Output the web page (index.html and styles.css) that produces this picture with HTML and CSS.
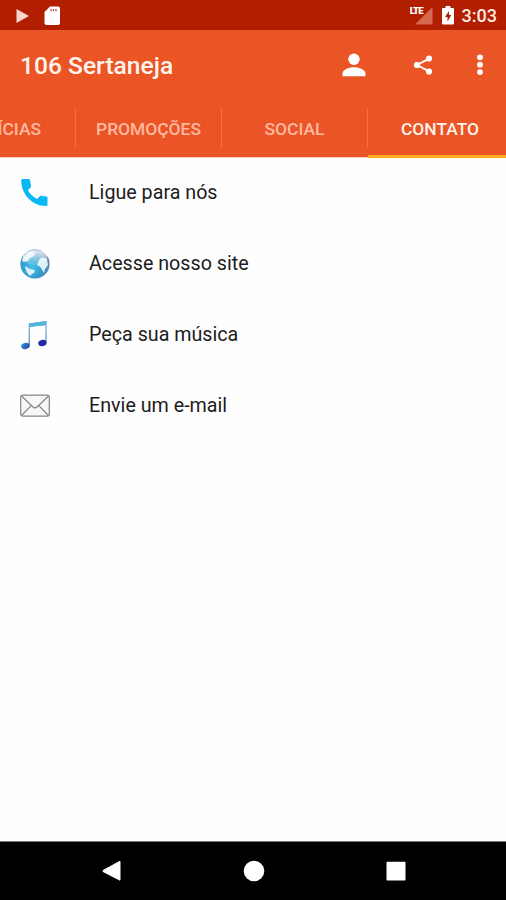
FILE: index.html
```html
<!DOCTYPE html>
<html lang="pt-BR">
<head>
<meta charset="utf-8">
<title>106 Sertaneja</title>
<link rel="stylesheet" href="styles.css">
</head>
<body>
<header class="status">
  <svg class="status-play" width="14" height="16" viewBox="0 0 14 16"><path d="M.5 1 13 8 .5 15z" fill="#f8d5ca"/></svg>
  <svg class="status-card" width="16" height="20" viewBox="0 0 16 20"><path d="M6 .5h8a2 2 0 0 1 2 2V17a2 2 0 0 1-2 2H2.500a2 2 0 0 1-2-2V6z" fill="#fff"/><path d="M7 3v2.200M9.500 3v2.200M12 3v2.200" stroke="#b9503c" stroke-width="1.300"/></svg>
  <span class="lte">LTE</span>
  <svg class="status-signal" width="18" height="18" viewBox="0 0 18 18"><path d="M17.500 0v17.500H0z" fill="#d46b50"/></svg>
  <svg class="status-battery" width="12" height="19" viewBox="0 0 12 19"><path d="M3.500 0h5v2H11a1 1 0 0 1 1 1v14.500a1 1 0 0 1-1 1H1a1 1 0 0 1-1-1V3a1 1 0 0 1 1-1h2.500z" fill="#fff"/><path d="M7 5 3 11h2.500v4.500L9.300 9H7z" fill="#a91f08"/></svg>
  <time class="clock">3:03</time>
</header>
<div class="appbar">
  <h1>106 Sertaneja</h1>
  <svg class="person" width="24" height="24" viewBox="0 0 24 24" fill="#fff"><circle cx="12" cy="6.300" r="5.700"/><path d="M.5 23.300v-2.500c0-4 6-6.500 11.500-6.500s11.500 2.500 11.500 6.500v2.500z"/></svg>
  <svg class="share" width="20" height="20" viewBox="0 0 20 20" fill="#fff"><path d="M16 3.600 4 10l12 6.400" fill="none" stroke="#fff" stroke-width="1.800"/><circle cx="16" cy="3.500" r="3.100"/><circle cx="4" cy="10" r="3.100"/><circle cx="16" cy="16.500" r="3.100"/></svg>
  <svg class="more" width="6" height="22" viewBox="0 0 6 22" fill="#fff"><circle cx="3" cy="3.300" r="2.900"/><circle cx="3" cy="10.700" r="2.900"/><circle cx="3" cy="18.100" r="2.900"/></svg>
</div>
<nav class="tabs">
  <span class="tab tab-first">ÍCIAS</span>
  <span class="tab">PROMOÇÕES</span>
  <span class="tab">SOCIAL</span>
  <span class="tab active">CONTATO</span>
</nav>
<main class="list">
  <div class="row">
    <svg width="30" height="30" viewBox="0 0 30 30"><path d="M2.500 1h6c1 0 1.500.6 1.600 1.500.1 1.800.4 3.300.9 4.800.2.800.1 1.300-.4 1.900l-2.700 3a22 22 0 0 0 9.300 8.800l2.800-2.900c.6-.6 1.100-.7 1.800-.4 1.500.5 3.100.8 4.500.8.900 0 1.200.5 1.200 1.400v6.500c0 1.200-.5 1.600-1.500 1.600C12.500 28 1.500 17 1.200 2.500 1.200 1.500 1.700 1 2.500 1z" fill="#08b7f5"/></svg>
    <span>Ligue para nós</span>
  </div>
  <div class="row">
    <svg width="30" height="30" viewBox="0 0 30 30">
      <defs>
        <radialGradient id="sea" cx=".4" cy=".6" r=".65"><stop offset="0" stop-color="#3fc4ea"/><stop offset=".6" stop-color="#3498c8"/><stop offset="1" stop-color="#6f7fa8"/></radialGradient>
        <linearGradient id="shine" x2="0" y2="1"><stop offset="0" stop-color="#fff" stop-opacity=".85"/><stop offset="1" stop-color="#fff" stop-opacity=".1"/></linearGradient>
      </defs>
      <circle cx="15" cy="15" r="14.600" fill="url(#sea)"/>
      <path d="M2 11Q5 4 12 2l3 2-1 3-4 2-2 3-5 1zM19 11l3-3 5 2 1 6-3 4-1 4-3-5-2-2-2-1zM5 17l5 3 5 1-1 3-2 1-2 2q-4-3-5-10z" fill="#eaf6fa" opacity=".92"/>
      <ellipse cx="15" cy="8.500" rx="12.500" ry="7.500" fill="url(#shine)"/>
    </svg>
    <span>Acesse nosso site</span>
  </div>
  <div class="row">
    <svg width="30" height="30" viewBox="0 0 30 30">
      <defs>
        <linearGradient id="stem" x2="0" y2="1"><stop offset="0" stop-color="#62b9dc"/><stop offset="1" stop-color="#3a52ab"/></linearGradient>
        <linearGradient id="note" x2="1" y2="1"><stop offset="0" stop-color="#3f9be0"/><stop offset="1" stop-color="#12409d"/></linearGradient>
      </defs>
      <path d="M8.700 3.500 26.500 1v21.500h-1V5.200L9.700 7v18.500h-1z" fill="url(#stem)"/>
      <path d="M9 3.500 26.300 1v3.700L9 6.800z" fill="#55b4d8"/>
      <ellipse cx="5.400" cy="26" rx="4.300" ry="3" transform="rotate(-15 5.400 26)" fill="url(#note)"/>
      <ellipse cx="22.400" cy="23" rx="4.200" ry="3.200" transform="rotate(-15 22.400 23)" fill="#1f2ba5"/>
    </svg>
    <span>Peça sua música</span>
  </div>
  <div class="row">
    <svg width="30" height="30" viewBox="0 0 30 30" fill="none" stroke="#858585" stroke-width="1.200"><rect x=".7" y="4.100" width="28.600" height="21" rx="2" fill="#f7f7f7"/><path d="m1.500 5 11.200 10.800q2.300 2 4.600 0L28.500 5M1.500 24.500l9.700-9.800M28.500 24.500l-9.700-9.800"/></svg>
    <span>Envie um e-mail</span>
  </div>
</main>
<footer class="navbar">
  <svg width="22" height="22" viewBox="0 0 22 22"><path d="M19 1.200v19L2 11.500v-1z" fill="#fff" stroke="#fff" stroke-linejoin="round"/></svg>
  <svg width="22" height="22" viewBox="0 0 22 22"><circle cx="11" cy="11" r="10.300" fill="#fff"/></svg>
  <svg width="22" height="22" viewBox="0 0 22 22"><rect x="1.500" y="1.800" width="19" height="18.800" rx="1" fill="#fff"/></svg>
</footer>
</body>
</html>
```
FILE: styles.css
```css
* { box-sizing: border-box; }
body {
  margin: 0;
  height: 900px;
  display: flex;
  flex-direction: column;
  overflow: hidden;
  background: #fefefe;
  font-family: Roboto, sans-serif;
}
svg { display: block; flex: none; }
.status {
  height: 30px;
  display: flex;
  align-items: center;
  padding: 1px 9px 0 16px;
  background: #b11e00;
  color: #ffece6;
}
.status-card { margin-left: 14px; }
.lte {
  margin-left: auto;
  align-self: flex-start;
  margin-top: 4px;
  font: 900 9.500px/12px "Roboto", sans-serif;
  letter-spacing: -.9px;
  color: #fff;
}
.status-signal { margin-left: -8px; }
.status-battery { margin-left: 9px; }
.clock {
  margin-left: 8px;
  font-size: 18px;
  font-weight: 500;
  line-height: 28px;
}
.appbar {
  height: 70px;
  display: flex;
  align-items: center;
  padding: 0 23px 0 20px;
  background: #eb5424;
}
h1 {
  margin: 1px 0 0;
  font-size: 24.600px;
  line-height: 30px;
  font-weight: 500;
  color: #fff4ee;
}
.person { margin-left: auto; }
.share { margin-left: 47px; }
.more { margin-left: 44px; }
.tabs {
  height: 58px;
  display: flex;
  border-bottom: 1px solid #f9cabb;
  background: #eb5424;
}
.tab {
  position: relative;
  flex: none;
  width: 146px;
  height: 57px;
  display: flex;
  justify-content: center;
  padding-right: 1px;
  font-size: 17.400px;
  line-height: 58px;
  font-weight: 500;
  color: #ffb9a1;
}
.tab-first { width: 76px; justify-content: flex-end; padding-right: 35px; }
.tab:not(.active)::after {
  content: "";
  position: absolute;
  right: 0;
  top: 8px;
  width: 1px;
  height: 40px;
  background: #f0714a;
}
.active {
  height: 58px;
  padding-right: 2px;
  color: #fff1eb;
  border-bottom: 3px solid #fcae22;
}
.list { flex: 1; }
.row {
  height: 71px;
  display: flex;
  align-items: center;
  gap: 39px;
  padding: 0 0 2px 20px;
}
.row span {
  font-size: 19.700px;
  line-height: 28px;
  color: #1c1c1c;
}
.navbar {
  height: 59px;
  display: flex;
  align-items: center;
  justify-content: center;
  gap: 120px;
  padding-left: 1px;
  border-top: 1px solid #777;
  background: #000;
}
```
